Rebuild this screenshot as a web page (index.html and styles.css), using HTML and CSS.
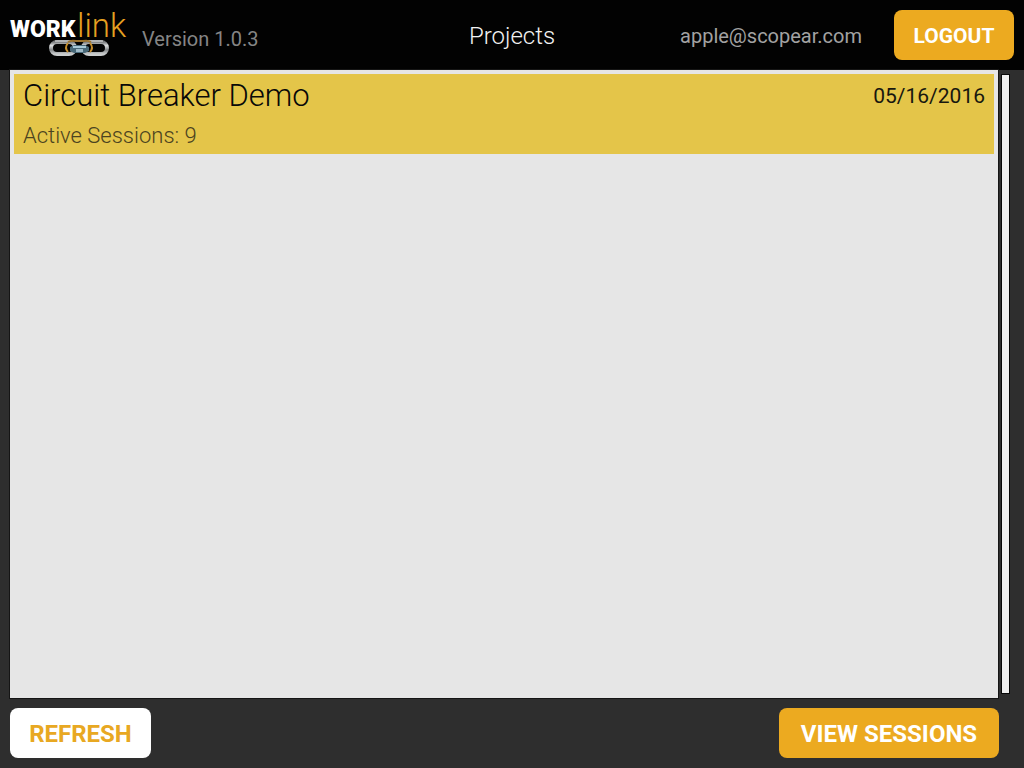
FILE: index.html
```html
<!DOCTYPE html>
<html lang="en">
<head>
<meta charset="utf-8">
<meta name="viewport" content="width=device-width, initial-scale=1">
<title>WorkLink - Projects</title>
<link rel="stylesheet" href="styles.css">
</head>
<body>
<header class="topbar">
  <div class="brand">
    <svg class="logo" viewBox="0 0 116 50" role="img" aria-label="WorkLink">
      <defs>
        <linearGradient id="steel" x1="0" y1="0" x2="0" y2="1">
          <stop offset="0" stop-color="#77797b"/>
          <stop offset=".3" stop-color="#dcdedf"/>
          <stop offset=".65" stop-color="#85888a"/>
          <stop offset="1" stop-color="#c9cccd"/>
        </linearGradient>
      </defs>
      <text class="logo-work" x="0" y="27">WORK</text>
      <text class="logo-link" x="67" y="27">link</text>
      <g fill="none">
        <rect x="41" y="32" width="24" height="12" rx="6" stroke="url(#steel)" stroke-width="4"/>
        <rect x="73" y="32" width="24" height="12" rx="6" stroke="url(#steel)" stroke-width="4"/>
        <path d="M45 31h17M77 31h16" stroke="#f0f1f1"/>
        <path d="M58 33q-4 5 0 9M80 33q4 5 0 9" stroke="#c58d2b" stroke-width="2"/>
        <path d="M58 32q3-2 8-1h7q5-1 8 1" stroke="#9b742f" stroke-width="2"/>
      </g>
      <path d="M60 37l4-2h11l4 2v4l-4 2H64l-4-2z" fill="#486979"/>
      <path d="M63 37h13" stroke="#a8c9d7" stroke-width="2"/>
      <path d="M66 39h7v3h-7z" fill="#9eb9c7"/>
    </svg>
    <span class="version">Version 1.0.3</span>
  </div>
  <h1 class="page-title">Projects</h1>
  <div class="account">
    <span class="email">apple@scopear.com</span>
    <button class="button button-logout" type="button">LOGOUT</button>
  </div>
</header>
<main class="content">
  <ul class="projects">
    <li>
      <button class="project" type="button">
        <span class="project-info">
          <span class="project-name">Circuit Breaker Demo</span>
          <span class="project-sessions">Active Sessions: 9</span>
        </span>
        <time class="project-date" datetime="2016-05-16">05/16/2016</time>
      </button>
    </li>
  </ul>
  <div class="scrollbar" aria-hidden="true"></div>
</main>
<footer class="actions">
  <button class="button button-light" type="button">REFRESH</button>
  <button class="button button-view" type="button">VIEW SESSIONS</button>
</footer>
</body>
</html>
```

FILE: styles.css
```css
* {
  box-sizing: border-box;
}

body {
  display: flex;
  flex-direction: column;
  min-height: 100vh;
  margin: 0;
  background: #2e2e2e;
  font-family: Roboto, "Liberation Sans", sans-serif;
}

.topbar {
  display: grid;
  grid-template-columns: 1fr auto 1fr;
  align-items: center;
  min-height: 70px;
  padding: 0 10px;
  background: #020202;
}

.brand {
  display: flex;
  align-items: center;
  gap: 16px;
}

.logo {
  width: 116px;
  height: 50px;
  overflow: visible;
}

.logo-work {
  fill: #fff;
  font-size: 23px;
  font-weight: 900;
}

.logo-link {
  fill: #e5a021;
  font-size: 33px;
  font-weight: 300;
}

.version {
  padding-top: 8px;
  color: #858585;
  font-size: 20px;
  line-height: 24px;
}

.page-title {
  margin: 0;
  padding-top: 2px;
  color: #f2f2f2;
  font-size: 24px;
  font-weight: 300;
  line-height: 28px;
}

.account {
  display: flex;
  align-items: center;
  justify-content: flex-end;
  gap: 32px;
}

.email {
  padding-top: 2px;
  color: #a2a2a2;
  font-size: 20px;
  line-height: 24px;
}

.button {
  height: 50px;
  padding: 2px 0 0;
  border: 0;
  border-radius: 8px;
  background: #ecaa20;
  color: #fff;
  font-family: inherit;
  font-size: 24px;
  font-weight: 700;
  line-height: 28px;
}

.button-logout {
  width: 120px;
  font-size: 21px;
}

.button-light {
  width: 141px;
  background: #fff;
  color: #e8a822;
}

.button-view {
  width: 220px;
}

.content {
  display: flex;
  flex: 1;
  gap: 4px;
  padding: 0 15px 0 10px;
}

.projects {
  flex: 1;
  margin: 0;
  padding: 4px;
  background: #e6e6e6;
  box-shadow: 0 0 0 1px #151515;
  list-style: none;
}

.project {
  display: flex;
  align-items: flex-start;
  justify-content: space-between;
  width: 100%;
  min-height: 80px;
  padding: 4px 9px;
  border: 0;
  background: #e4c549;
  color: #080808;
  font-family: inherit;
  text-align: left;
}

.project-info {
  display: flex;
  flex-direction: column;
  gap: 8px;
}

.project-name {
  font-size: 31px;
  font-weight: 300;
  line-height: 36px;
}

.project-sessions {
  color: #4b4320;
  font-size: 22px;
  font-weight: 300;
  line-height: 28px;
}

.project-date {
  padding-top: 4px;
  color: #17170f;
  font-size: 21px;
  line-height: 28px;
}

.scrollbar {
  width: 7px;
  margin: 5px 0;
  background: #efefef;
  box-shadow: 0 0 0 1px #080808;
}

.actions {
  display: flex;
  justify-content: space-between;
  padding: 10px 25px 10px 10px;
}
```
